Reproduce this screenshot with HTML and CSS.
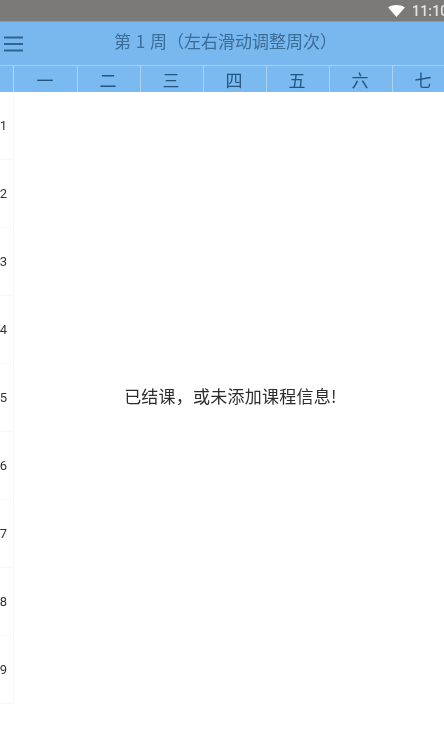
FILE: index.html
```html
<!DOCTYPE html>
<html lang="zh-CN">
<head>
<meta charset="utf-8">
<title>课程表</title>
<link rel="stylesheet" href="styles.css">
</head>
<body>
<div class="page">
  <div class="status">
    <svg class="wifi" viewBox="0 0 18 13" aria-hidden="true"><path d="M0 2.6C2.4.9 5.6 0 9 0s6.600.9 9 2.600L9 13z"/></svg>
    <span class="clock">11:10</span>
  </div>
  <header class="bar">
    <svg class="menu" viewBox="0 0 19 16" aria-hidden="true">
      <path d="M0 1.500h19M0 8h19M0 14.500h19"/>
    </svg>
    <h1 class="title">第 1 周（左右滑动调整周次）</h1>
  </header>
  <div class="days">
    <div class="corner"></div>
    <div class="day">一</div>
    <div class="day">二</div>
    <div class="day">三</div>
    <div class="day">四</div>
    <div class="day">五</div>
    <div class="day">六</div>
    <div class="day">七</div>
  </div>
  <main class="table">
    <div class="periods">
      <div class="period"><span>1</span></div>
      <div class="period"><span>2</span></div>
      <div class="period"><span>3</span></div>
      <div class="period"><span>4</span></div>
      <div class="period"><span>5</span></div>
      <div class="period"><span>6</span></div>
      <div class="period"><span>7</span></div>
      <div class="period"><span>8</span></div>
      <div class="period"><span>9</span></div>
    </div>
    <div class="empty"><p class="message">已结课，或未添加课程信息!</p></div>
  </main>
</div>
</body>
</html>
```

FILE: styles.css
```css
* { box-sizing: border-box; }
html, body { margin: 0; padding: 0; background: #fff; }
.page {
  width: 444px;
  height: 754px;
  overflow: hidden;
  display: flex;
  flex-direction: column;
  font-family: "Noto Sans CJK SC", "Noto Sans", sans-serif;
  filter: blur(0.35px);
}
.status {
  height: 21px;
  flex: none;
  background: #7b7a79;
  display: flex;
  align-items: center;
  justify-content: flex-end;
  gap: 7px;
  margin-right: -14px;
}
.wifi { width: 17px; height: 12px; fill: #fff; }
.clock {
  font-family: Roboto, sans-serif;
  font-size: 14px;
  font-weight: 500;
  letter-spacing: 0.2px;
  color: #e4e4e4;
  width: 46px;
}
.bar {
  height: 44px;
  flex: none;
  background: #78b8ef;
  border-top: 1px solid #6f9fc8;
  display: flex;
  align-items: center;
  position: relative;
  padding-left: 4px;
}
.menu {
  width: 19px;
  height: 16px;
  fill: none;
  stroke: #2f6593;
  stroke-width: 2;
}
.title {
  position: absolute;
  left: 114px;
  top: 7px;
  margin: 0;
  font-size: 17px;
  line-height: 24px;
  font-weight: 400;
  word-spacing: 1px;
  white-space: nowrap;
  color: #3b6c96;
}
.days {
  height: 27px;
  flex: none;
  display: flex;
  background: #7bbaf0;
  border-top: 1px solid #a2d0f6;
  overflow: hidden;
  color: #235580;
  font-size: 17px;
}
.corner {
  width: 14px;
  flex: none;
  margin-right: 1px;
  border-right: 1px solid #b4d8f7;
}
.day {
  width: 63px;
  flex: none;
  display: flex;
  align-items: center;
  justify-content: center;
  padding-right: 2px;
  border-right: 1px solid #aad2f5;
}
.table {
  flex: 1;
  display: flex;
  min-height: 0;
}
.periods {
  width: 14px;
  flex: none;
  border-right: 1px solid #f6f6f6;
  align-self: flex-start;
}
.period {
  height: 68px;
  display: flex;
  align-items: center;
  justify-content: flex-end;
  padding-right: 6px;
  border-bottom: 1px solid #f6f6f6;
  font-family: Roboto, sans-serif;
  font-size: 13px;
  color: #333;
}
.empty {
  flex: 1;
  display: flex;
  justify-content: center;
  padding-top: 291px;
  padding-left: 3px;
}
.message {
  margin: 0;
  font-size: 17px;
  line-height: 26px;
  letter-spacing: 0.25px;
  color: #2c2c2c;
  white-space: nowrap;
}
```
